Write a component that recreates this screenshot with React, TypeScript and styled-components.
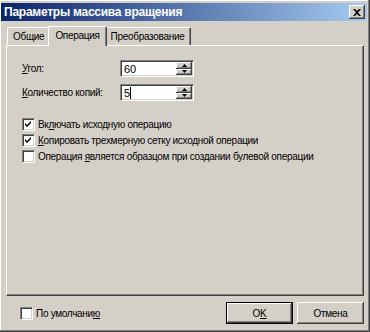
import React from "react";
import styled, { createGlobalStyle } from "styled-components";

const Global = createGlobalStyle`
  html, body { margin: 0; padding: 0; background: #d4d0c8; }
  body { font-family: "Liberation Sans", "DejaVu Sans", sans-serif; font-size: 10px; letter-spacing: -0.3px; color: #000; }
`;

const Window = styled.div`
  width: 370px;
  height: 332px;
  box-sizing: border-box;
  background: #d4d0c8;
  padding: 3px 3px 3px 1px;
  display: flex;
  flex-direction: column;
  box-shadow: inset -1px -1px 0 #404040, inset -2px -2px 0 #808080, inset 1px 1px 0 #ffffff;
`;

const TitleBar = styled.div`
  height: 18px;
  background: linear-gradient(to right, #0a246a, #a6caf0);
  display: flex;
  align-items: center;
  justify-content: space-between;
  padding: 0 2px 0 3px;
  flex-shrink: 0;
`;

const Title = styled.div`
  color: #fff;
  font-weight: bold;
  font-size: 12px;
  letter-spacing: -0.25px;
`;

const CloseBtn = styled.div`
  width: 16px;
  height: 14px;
  background: #d4d0c8;
  box-shadow: inset -1px -1px 0 #404040, inset 1px 1px 0 #ffffff, inset -2px -2px 0 #808080;
  display: flex;
  align-items: center;
  justify-content: center;
`;

const Body = styled.div`
  flex: 1;
  display: flex;
  flex-direction: column;
  padding: 4px 3px 0 5px;
`;

const Tabs = styled.div`
  display: flex;
  align-items: flex-end;
  height: 20px;
  padding-left: 1px;
  position: relative;
  z-index: 1;
`;

const Tab = styled.div<{ $active?: boolean }>`
  height: ${(p) => (p.$active ? "20px" : "18px")};
  box-sizing: border-box;
  padding: ${(p) => (p.$active ? "0 6px 3px 6px" : "0 5px 1px 5px")};
  margin: ${(p) => (p.$active ? "0 -2px -1px -2px" : "0")};
  display: flex;
  align-items: center;
  background: #d4d0c8;
  border-top: 1px solid #fff;
  border-left: 1px solid #fff;
  border-right: 1px solid #404040;
  border-radius: 2px 2px 0 0;
  box-shadow: inset -1px 0 0 #808080;
  position: relative;
  z-index: ${(p) => (p.$active ? 2 : 0)};
`;

const Panel = styled.div`
  height: 251px;
  box-sizing: border-box;
  border-top: 1px solid #fff;
  border-left: 1px solid #fff;
  border-right: 1px solid #404040;
  border-bottom: 1px solid #404040;
  box-shadow: inset -1px -1px 0 #808080;
  padding: 14px 0 0 15px;
  display: flex;
  flex-direction: column;
`;

const FieldRow = styled.div`
  display: grid;
  grid-template-columns: 98px 74px;
  align-items: center;
  height: 17px;
  margin-bottom: 7px;
`;

const U = styled.span`
  text-decoration: underline;
`;

const SpinBox = styled.div`
  height: 17px;
  box-sizing: border-box;
  background: #fff;
  border-top: 1px solid #808080;
  border-left: 1px solid #808080;
  border-right: 1px solid #fff;
  border-bottom: 1px solid #fff;
  box-shadow: inset 1px 1px 0 #404040, inset -1px -1px 0 #d4d0c8;
  display: flex;
  align-items: stretch;
`;

const SpinText = styled.div`
  flex: 1;
  padding: 1px 0 0 3px;
  font-size: 11px;
  letter-spacing: 0;
  display: flex;
  align-items: center;
`;

const Caret = styled.span`
  display: inline-block;
  width: 1px;
  height: 12px;
  background: #000;
`;

const SpinButtons = styled.div`
  width: 16px;
  display: flex;
  flex-direction: column;
  padding: 1px 1px 1px 0;
`;

const SpinBtn = styled.div`
  flex: 1;
  background: #d4d0c8;
  box-shadow: inset -1px -1px 0 #404040, inset 1px 1px 0 #ffffff, inset -2px -2px 0 #808080;
  display: flex;
  align-items: center;
  justify-content: center;
`;

const Checks = styled.div`
  margin-top: 10px;
  display: flex;
  flex-direction: column;
  gap: 3px;
`;

const CheckRow = styled.div`
  display: flex;
  align-items: center;
  gap: 3px;
  height: 13px;
`;

const Box = styled.div`
  width: 13px;
  height: 13px;
  box-sizing: border-box;
  background: #fff;
  border-top: 1px solid #808080;
  border-left: 1px solid #808080;
  border-right: 1px solid #fff;
  border-bottom: 1px solid #fff;
  box-shadow: inset 1px 1px 0 #404040, inset -1px -1px 0 #d4d0c8;
  display: flex;
  align-items: center;
  justify-content: center;
  flex-shrink: 0;
`;

const Footer = styled.div`
  display: flex;
  align-items: center;
  justify-content: space-between;
  padding: 6px 0 0 14px;
`;

const Buttons = styled.div`
  display: flex;
  gap: 4px;
`;

const Button = styled.div<{ $default?: boolean }>`
  width: 67px;
  height: 22px;
  box-sizing: border-box;
  background: #d4d0c8;
  display: flex;
  align-items: center;
  justify-content: center;
  box-shadow: ${(p) =>
    p.$default
      ? "inset 0 0 0 1px #000, inset -2px -2px 0 #404040, inset 2px 2px 0 #ffffff, inset -3px -3px 0 #808080"
      : "inset -1px -1px 0 #404040, inset 1px 1px 0 #ffffff, inset -2px -2px 0 #808080"};
`;

const Check = () => (
  <svg width="7" height="7" viewBox="0 0 7 7">
    <path d="M0 2 L2 4 L6 0 L6 2 L2 6 L0 4 Z" fill="#000" />
  </svg>
);

const Arrow = ({ up }: { up?: boolean }) => (
  <svg width="5" height="3" viewBox="0 0 5 3">
    <path d={up ? "M2.5 0 L5 3 L0 3 Z" : "M0 0 L5 0 L2.5 3 Z"} fill="#000" />
  </svg>
);

const Spin = ({ value, caret }: { value: string; caret?: boolean }) => (
  <SpinBox>
    <SpinText>
      {value}
      {caret && <Caret />}
    </SpinText>
    <SpinButtons>
      <SpinBtn><Arrow up /></SpinBtn>
      <SpinBtn><Arrow /></SpinBtn>
    </SpinButtons>
  </SpinBox>
);

export default function App() {
  return (
    <>
      <Global />
      <Window>
        <TitleBar>
          <Title>Параметры массива вращения</Title>
          <CloseBtn>
            <svg width="8" height="7" viewBox="0 0 8 7">
              <path d="M0 0 L2 0 L4 2 L6 0 L8 0 L5 3.5 L8 7 L6 7 L4 5 L2 7 L0 7 L3 3.5 Z" fill="#000" />
            </svg>
          </CloseBtn>
        </TitleBar>
        <Body>
          <Tabs>
            <Tab>Общие</Tab>
            <Tab $active>Операция</Tab>
            <Tab>Преобразование</Tab>
          </Tabs>
          <Panel>
            <FieldRow>
              <span><U>У</U>гол:</span>
              <Spin value="60" />
            </FieldRow>
            <FieldRow>
              <span><U>К</U>оличество копий:</span>
              <Spin value="5" caret />
            </FieldRow>
            <Checks>
              <CheckRow>
                <Box><Check /></Box>
                <span>Вк<U>л</U>ючать исходную операцию</span>
              </CheckRow>
              <CheckRow>
                <Box><Check /></Box>
                <span><U>К</U>опировать трехмерную сетку исходной операции</span>
              </CheckRow>
              <CheckRow>
                <Box />
                <span>Операция <U>я</U>вляется образцом при создании булевой операции</span>
              </CheckRow>
            </Checks>
          </Panel>
          <Footer>
            <CheckRow>
              <Box />
              <span>По умолчани<U>ю</U></span>
            </CheckRow>
            <Buttons>
              <Button $default>O<U>K</U></Button>
              <Button>Отмена</Button>
            </Buttons>
          </Footer>
        </Body>
      </Window>
    </>
  );
}
